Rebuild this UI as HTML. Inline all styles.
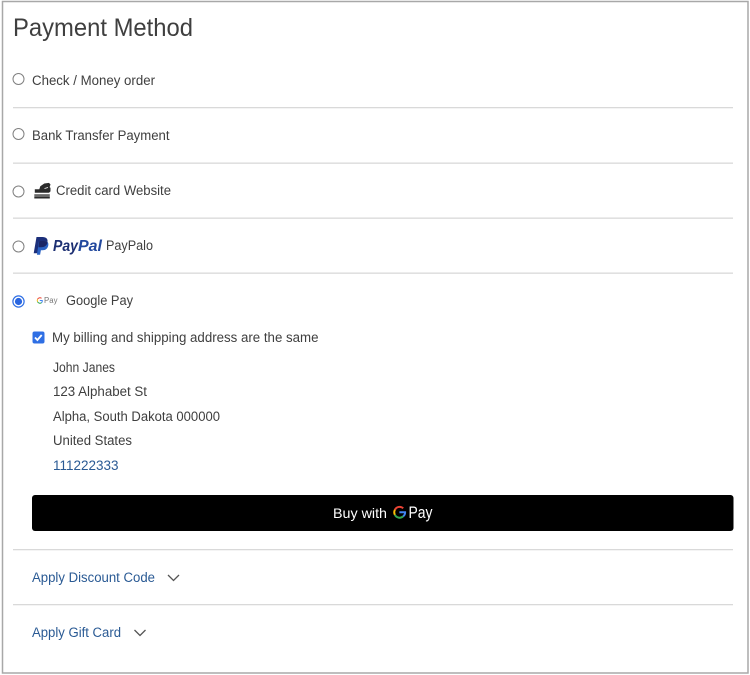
<!DOCTYPE html>
<html>
<head>
<meta charset="utf-8">
<style>
html,body{margin:0;padding:0;background:#fff;width:750px;height:675px;overflow:hidden}
svg{display:block}
text{font-family:"Liberation Sans",sans-serif;fill:#3f3f3f}
.t{font-size:14.2px}
.l{fill:#2a5a94}
</style>
</head>
<body>
<svg width="750" height="675" viewBox="0 0 750 675" xmlns="http://www.w3.org/2000/svg">
<rect x="2.500" y="1.500" width="745.500" height="671.500" fill="#fff" stroke="#a8a8a8" stroke-width="1.500"/>
<text x="13" y="36" font-size="25" textLength="180" lengthAdjust="spacingAndGlyphs">Payment Method</text>

<g fill="#d9d9d9">
<rect x="13" y="107" width="720" height="1.300"/>
<rect x="13" y="162.500" width="720" height="1.300"/>
<rect x="13" y="217.500" width="720" height="1.300"/>
<rect x="13" y="272.500" width="720" height="1.300"/>
<rect x="13" y="549" width="720" height="1.300"/>
<rect x="13" y="604" width="720" height="1.300"/>
</g>

<g fill="#fff" stroke="#808080" stroke-width="1">
<circle cx="18.500" cy="79" r="5.500"/>
<circle cx="18.500" cy="134" r="5.500"/>
<circle cx="18.500" cy="191.500" r="5.500"/>
<circle cx="18.500" cy="246.500" r="5.500"/>
</g>
<circle cx="18.500" cy="301.500" r="5.600" fill="#fff" stroke="#2f6fe4" stroke-width="1.200"/>
<circle cx="18.500" cy="301.500" r="3.600" fill="#2a66e0"/>

<text class="t" x="32" y="85" textLength="123" lengthAdjust="spacingAndGlyphs">Check / Money order</text>
<text class="t" x="32" y="140" textLength="137.500" lengthAdjust="spacingAndGlyphs">Bank Transfer Payment</text>

<!-- credit card icon -->
<g fill="#2b2b2b">
<path d="M34.800 192.800v-3.600h4.500l1-3 4-2.700 4.700-.6 1.500 1.600-.9 2.600 .9 .8v3.500l-1.500 1.400z"/>
<rect x="34.300" y="194.400" width="15.500" height="1.300"/>
<rect x="34.300" y="196.300" width="15.500" height="2.200"/>
</g>
<path d="M44.500 188.500l3.500-1" stroke="#fff" stroke-width=".8" fill="none"/>
<text class="t" x="56" y="195" textLength="115" lengthAdjust="spacingAndGlyphs">Credit card Website</text>

<!-- PayPal -->
<path d="M36.500 237h6c3.500 0 5.500 1.800 5 4.800-.6 3.600-3 5.500-6.500 5.500h-2.300l-1 6h-4z" fill="#1c2f7a"/>
<path d="M39 241h5.500c2.800 0 4.300 1.500 3.800 4.300-.6 3.400-2.800 5-5.800 5h-1.600l-.8 4.500h-3.200z" fill="#2a62c4"/>
<path d="M39.200 241h4.800c1.500 0 2.800.4 3.500 1.300-.6 3.400-3 5-6.500 5h-2.500z" fill="#1a2566"/>
<text x="53" y="251" font-size="15.500" font-weight="700" font-style="italic" style="fill:#1c2f72" textLength="25" lengthAdjust="spacingAndGlyphs">Pay</text>
<text x="78" y="251" font-size="15.500" font-weight="700" font-style="italic" style="fill:#23499e" textLength="24" lengthAdjust="spacingAndGlyphs">Pal</text>
<text class="t" x="106" y="250" textLength="47" lengthAdjust="spacingAndGlyphs">PayPalo</text>

<!-- small gpay -->
<g fill="none" stroke-width="1">
<path d="M41.500 298.300a2.700 2.700 0 0 0-4 1" stroke="#ea4335"/>
<path d="M37.500 299.300a3 3 0 0 0 0 2.400" stroke="#fbbc04"/>
<path d="M37.500 301.700a2.700 2.700 0 0 0 4 1" stroke="#34a853"/>
<path d="M41.500 302.700a2.500 2.500 0 0 0 .8-2.200h-2.500" stroke="#4285f4"/>
</g>
<text x="44" y="303" font-size="8" style="fill:#777" textLength="13.500" lengthAdjust="spacingAndGlyphs">Pay</text>
<text class="t" x="66" y="305" textLength="67" lengthAdjust="spacingAndGlyphs">Google Pay</text>

<!-- checkbox -->
<rect x="32.500" y="331.500" width="12" height="12" rx="2" fill="#2f6fe4"/>
<path d="M35 337.500l2.400 2.500 4.300-5" fill="none" stroke="#fff" stroke-width="1.800"/>
<text class="t" x="52" y="342" textLength="266.500" lengthAdjust="spacingAndGlyphs">My billing and shipping address are the same</text>

<text class="t" x="53" y="372" textLength="62" lengthAdjust="spacingAndGlyphs">John Janes</text>
<text class="t" x="53" y="396" textLength="94" lengthAdjust="spacingAndGlyphs">123 Alphabet St</text>
<text class="t" x="53" y="421" textLength="167" lengthAdjust="spacingAndGlyphs">Alpha, South Dakota 000000</text>
<text class="t" x="53" y="445" textLength="79" lengthAdjust="spacingAndGlyphs">United States</text>
<text class="t l" x="53" y="470" textLength="65.500" lengthAdjust="spacingAndGlyphs">111222333</text>

<!-- buy button -->
<rect x="32" y="495" width="701.500" height="36" rx="3" fill="#000"/>
<text x="333" y="518" font-size="14" style="fill:#fff" textLength="54" lengthAdjust="spacingAndGlyphs">Buy with</text>
<g fill="none" stroke-width="2">
<path d="M403.200 508.300a5.200 5.200 0 0 0-8.300 1.500" stroke="#ea4335"/>
<path d="M394.900 509.800a5.500 5.500 0 0 0 0 5" stroke="#fbbc04"/>
<path d="M394.900 514.800a5.300 5.300 0 0 0 8.300 1.500" stroke="#34a853"/>
<path d="M403.200 516.300a5 5 0 0 0 1.900-4.100h-5.700" stroke="#4285f4"/>
</g>
<text x="408.500" y="518" font-size="16.500" style="fill:#fff" textLength="24" lengthAdjust="spacingAndGlyphs">Pay</text>

<!-- collapsibles -->
<text class="t l" x="32" y="582" textLength="123" lengthAdjust="spacingAndGlyphs">Apply Discount Code</text>
<path d="M168 575l5.500 5.500 5.500-5.500" fill="none" stroke="#555" stroke-width="1.300"/>
<text class="t l" x="32" y="637" textLength="89" lengthAdjust="spacingAndGlyphs">Apply Gift Card</text>
<path d="M134.500 630l5.500 5.500 5.500-5.500" fill="none" stroke="#555" stroke-width="1.300"/>
</svg>
</body>
</html>
